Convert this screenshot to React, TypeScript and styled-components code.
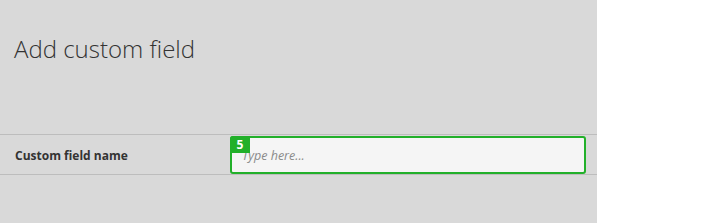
import { FC } from 'react';
import styled, { createGlobalStyle } from 'styled-components';

const GlobalStyle = createGlobalStyle`
  html, body {
    margin: 0;
    padding: 0;
    background: #ffffff;
    font-family: 'Open Sans', 'Liberation Sans', sans-serif;
  }
`;

const App: FC = () => {
  return (
    <>
      <GlobalStyle />
      <Panel>
        <Title>Add custom field</Title>
        <FieldRow>
          <Label>Custom field name</Label>
          <InputBox>
            <Input placeholder="Type here..." />
            <Badge>5</Badge>
          </InputBox>
        </FieldRow>
      </Panel>
    </>
  );
};

export default App;

const Panel = styled.div`
  width: 597px;
  min-height: 100vh;
  background: #d9d9d9;
  padding-top: 32px;
  box-sizing: border-box;
`;

const Title = styled.h1`
  margin: 0 0 69px 14px;
  font-size: 24px;
  font-weight: 300;
  line-height: 33px;
  color: #333333;
`;

const FieldRow = styled.div`
  display: grid;
  grid-template-columns: 230px 1fr;
  align-items: center;
  padding: 1px 11px 0 0;
  border-top: 1px solid #bdbdbd;
  border-bottom: 1px solid #bdbdbd;
`;

const Label = styled.div`
  padding-left: 15px;
  font-size: 12px;
  font-weight: 700;
  color: #333333;
`;

const InputBox = styled.div`
  position: relative;
  height: 38px;
  box-sizing: border-box;
  border: 2px solid #22b02a;
  border-radius: 3px;
  background: #f5f5f5;
`;

const Badge = styled.div`
  position: absolute;
  top: -2px;
  left: -2px;
  width: 20px;
  height: 17px;
  border-top-left-radius: 3px;
  background: #22b02a;
  color: #ffffff;
  font-size: 12px;
  font-weight: 700;
  line-height: 17px;
  text-align: center;
`;

const Input = styled.input`
  width: 100%;
  height: 100%;
  box-sizing: border-box;
  border: none;
  outline: none;
  background: transparent;
  padding: 0 10px;
  font-family: 'Open Sans', 'Liberation Sans', sans-serif;
  font-size: 12.5px;
  font-style: italic;
  color: #333333;

  &::placeholder {
    color: #8a8a8a;
  }
`;
